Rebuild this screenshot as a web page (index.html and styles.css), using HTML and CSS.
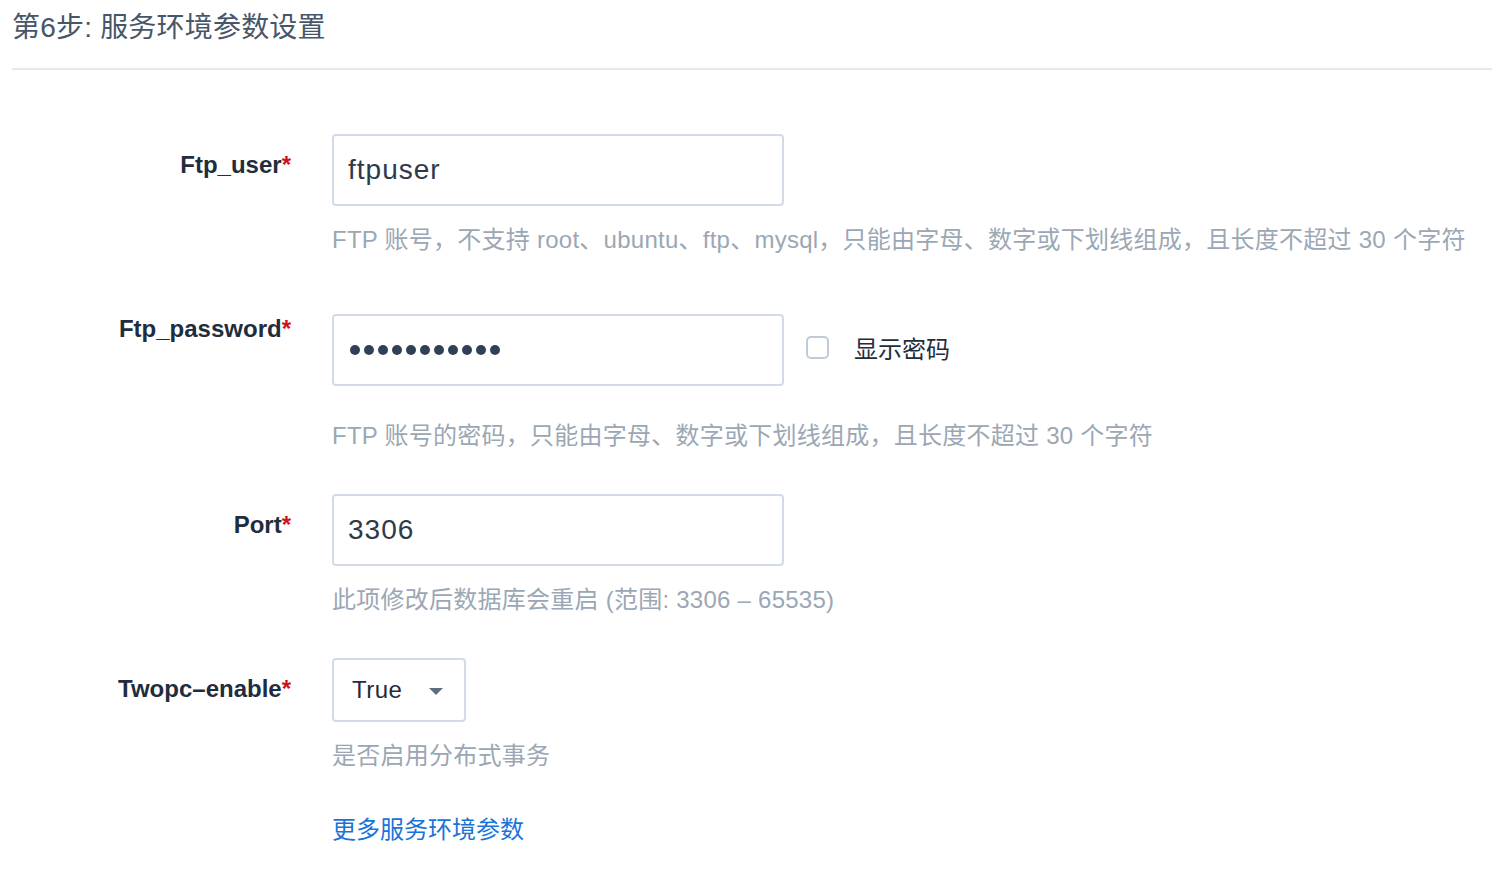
FILE: index.html
```html
<!DOCTYPE html>
<html lang="zh-CN">
<head>
<meta charset="utf-8">
<title>服务环境参数设置</title>
<link rel="stylesheet" href="styles.css">
</head>
<body>
<div class="page">
  <h2 class="step-title">第6步: 服务环境参数设置</h2>
  <div class="divider"></div>

  <form class="form">
    <div class="item">
      <label class="label">Ftp_user<span class="req">*</span></label>
      <div class="control">
        <div class="input"><span class="value">ftpuser</span></div>
        <div class="help">FTP 账号，不支持 root、ubuntu、ftp、mysql，只能由字母、数字或下划线组成，且长度不超过 30 个字符</div>
      </div>
    </div>

    <div class="item">
      <label class="label">Ftp_password<span class="req">*</span></label>
      <div class="control">
        <div class="pw-row">
          <div class="input">
            <span class="dots">
              <i></i><i></i><i></i><i></i><i></i><i></i><i></i><i></i><i></i><i></i><i></i>
            </span>
          </div>
          <label class="check">
            <span class="box"></span>
            <span class="check-text">显示密码</span>
          </label>
        </div>
        <div class="help">FTP 账号的密码，只能由字母、数字或下划线组成，且长度不超过 30 个字符</div>
      </div>
    </div>

    <div class="item">
      <label class="label">Port<span class="req">*</span></label>
      <div class="control">
        <div class="input"><span class="value">3306</span></div>
        <div class="help">此项修改后数据库会重启 (范围: 3306 – 65535)</div>
      </div>
    </div>

    <div class="item">
      <label class="label">Twopc–enable<span class="req">*</span></label>
      <div class="control">
        <div class="select"><span class="value">True</span><span class="caret"></span></div>
        <div class="help">是否启用分布式事务</div>
        <a class="more" href="#">更多服务环境参数</a>
      </div>
    </div>
  </form>
</div>
</body>
</html>
```

FILE: styles.css
```css
* { box-sizing: border-box; }

html, body {
  margin: 0;
  padding: 0;
  background: #ffffff;
}

body {
  font-family: "Liberation Sans", "Noto Sans CJK SC", sans-serif;
  color: #1f2d3d;
}

.page {
  padding: 8px 0 0 12px;
}

.step-title {
  margin: 0;
  font-size: 28px;
  line-height: 40px;
  font-weight: normal;
  color: #475669;
  letter-spacing: 0.2px;
}

.divider {
  height: 2px;
  margin-top: 20px;
  background: #e5e9f2;
}

.form {
  margin-top: 64px;
}

.item {
  display: flex;
  align-items: flex-start;
  margin-bottom: 41px;
}

.label {
  width: 279px;
  margin-right: 41px;
  padding-top: 14px;
  text-align: right;
  font-size: 24px;
  line-height: 34px;
  font-weight: 600;
  color: #1f2d3d;
}

.req {
  color: #d0111b;
}

.control {
  display: flex;
  flex-direction: column;
  align-items: flex-start;
}

.input {
  width: 452px;
  height: 72px;
  border: 2px solid #d3dce6;
  border-radius: 4px;
  padding: 0 14px;
  display: flex;
  align-items: center;
}

.value {
  font-size: 28px;
  color: #2d3a4a;
  letter-spacing: 1px;
}

.pw-row {
  display: flex;
  align-items: center;
  padding: 16px 0;
}

.dots {
  display: flex;
  gap: 4px;
  padding-left: 2px;
}

.dots i {
  display: block;
  width: 10px;
  height: 10px;
  border-radius: 50%;
  background: #324057;
}

.check {
  display: flex;
  align-items: center;
  margin-left: 22px;
  margin-top: -6px;
}

.box {
  width: 23px;
  height: 23px;
  border: 2px solid #bfcbd9;
  border-radius: 5px;
  background: #fff;
}

.check-text {
  margin-left: 25px;
  font-size: 24px;
  color: #1f2d3d;
}

.help {
  margin-top: 17px;
  font-size: 24px;
  line-height: 34px;
  color: #9ba7b4;
  white-space: nowrap;
  letter-spacing: 0.25px;
}

.select {
  width: 134px;
  height: 64px;
  border: 2px solid #d3dce6;
  border-radius: 4px;
  padding: 0 21px 0 18px;
  display: flex;
  align-items: center;
  justify-content: space-between;
}

.select .value {
  font-size: 24px;
  color: #1f2d3d;
  letter-spacing: 0.5px;
}

.caret {
  width: 0;
  height: 0;
  border-left: 7px solid transparent;
  border-right: 7px solid transparent;
  border-top: 7px solid #5e6d82;
  margin-top: 2px;
}

.more {
  margin-top: 40px;
  font-size: 24px;
  line-height: 34px;
  color: #1a73d8;
  text-decoration: none;
}
```
